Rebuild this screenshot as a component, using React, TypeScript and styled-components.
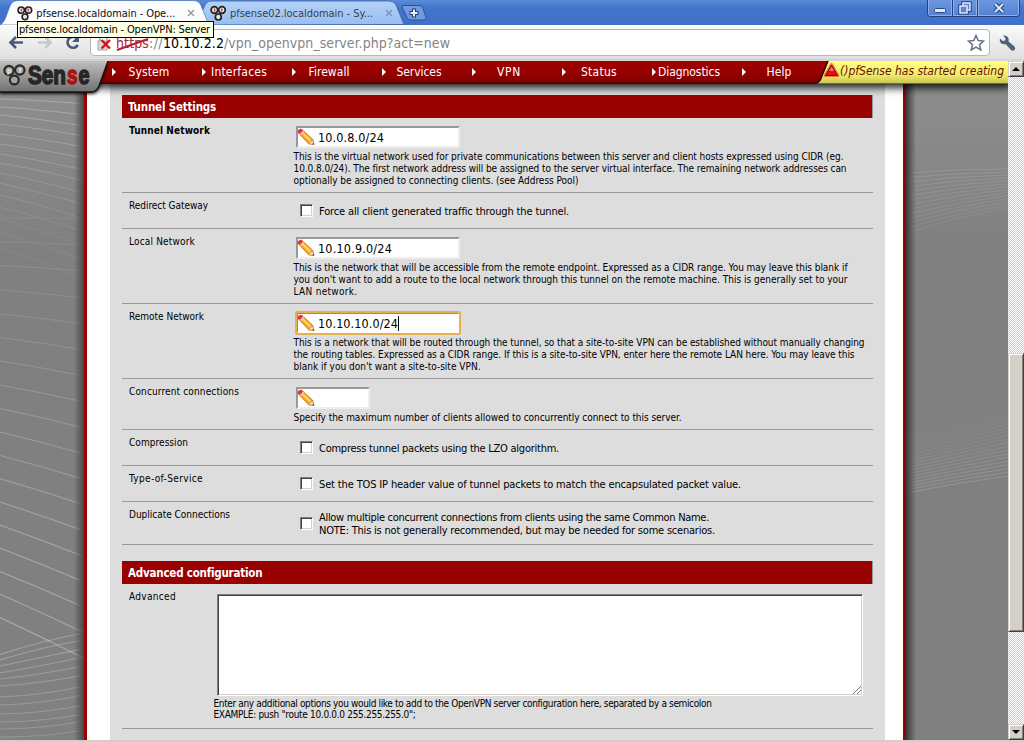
import React, { useLayoutEffect, useRef, useState } from "react";
import styled, { createGlobalStyle, css } from "styled-components";

const Global = createGlobalStyle`
  html, body { margin: 0; padding: 0; overflow: hidden; }
  body { width: 1024px; height: 742px; background: #808080; font-family: "DejaVu Sans Condensed", "DejaVu Sans", sans-serif; font-size: 11px; color: #000; }
  * { box-sizing: border-box; }
`;

const FitText = styled.span`
  display: inline-block;
  white-space: pre;
`;

/* Spreads the letters of one line so that it takes exactly the given width. */
function Fit({ w, children }: { w: number; children: string }) {
  const ref = useRef<HTMLSpanElement>(null);
  const [spacing, setSpacing] = useState(0);
  useLayoutEffect(() => {
    const el = ref.current;
    if (!el) return;
    setSpacing((w - el.getBoundingClientRect().width) / children.length);
  }, [w, children]);
  return <FitText ref={ref} style={{ letterSpacing: spacing }}>{children}</FitText>;
}

const Window = styled.div`
  width: 1024px;
  height: 742px;
  display: flex;
  flex-direction: column;
  overflow: hidden;
`;

/* ---------- browser chrome ---------- */
const TabStrip = styled.header`
  position: relative;
  flex: none;
  height: 25px;
  display: flex;
  background: linear-gradient(#5a8bd8 0, #4474cc 8px, #3f70c8 100%);
`;
const TabShapes = styled.svg`
  position: absolute;
  left: 0;
  top: 0;
`;
const Tab = styled.div<{ $dim?: boolean; $w: number; $pad: number }>`
  position: relative;
  display: flex;
  align-items: center;
  width: ${(p) => p.$w}px;
  padding-left: ${(p) => p.$pad}px;
  height: 25px;
  padding-top: 1px;
  gap: 3px;
  font-size: 11px;
  color: ${(p) => (p.$dim ? "#34404f" : "#111")};
`;
const TabClose = styled.svg`
  margin-left: 9px;
`;
const Controls = styled.div`
  position: absolute;
  right: 4px;
  top: 0;
  display: flex;
  height: 17px;
  border: 1px solid #22438a;
  border-top: 0;
  border-radius: 0 0 4px 4px;
  overflow: hidden;
`;
const Control = styled.div<{ $w: number }>`
  width: ${(p) => p.$w}px;
  height: 16px;
  border: 1px solid #8fb0e8;
  border-top: 0;
  background: linear-gradient(#6c98e0, #5583d2);
  display: flex;
  align-items: center;
  justify-content: center;
  & + & { box-shadow: -1px 0 0 #22438a; margin-left: 1px; }
`;
const Tooltip = styled.div`
  position: absolute;
  z-index: 5;
  left: 17px;
  top: 21px;
  width: 197px;
  height: 17px;
  padding-left: 1px;
  border: 1px solid #000;
  background: #ffffe1;
  font-size: 11px;
  line-height: 16px;
`;
const Toolbar = styled.div`
  flex: none;
  height: 36px;
  display: flex;
  align-items: center;
  background: linear-gradient(#fbfbfb, #dfdfdf 94%, #c8c8c8 97%, #e4e4e4);
`;
const NavButtons = styled.svg`
  flex: none;
`;
const AddressBar = styled.div`
  display: flex;
  align-items: center;
  width: 900px;
  height: 27px;
  margin-top: -1px;
  padding: 0 4px 0 6px;
  border: 1px solid #b4b6ba;
  border-radius: 4px;
  background: #fff;
  font-size: 14px;
  color: #858585;
`;
const Url = styled.div`
  flex: 1;
  display: flex;
  padding: 1px 0 0 5px;
`;
const Struck = styled.span`
  position: relative;
  color: #b02030;
`;
const StrikeLine = styled.svg`
  position: absolute;
  left: 0;
  top: 1px;
`;
const Host = styled.span`
  color: #000;
`;
const Wrench = styled.svg`
  margin-left: 8px;
`;

/* ---------- page ---------- */
const Viewport = styled.div`
  flex: none;
  height: 679px;
  display: flex;
`;
const Page = styled.div`
  position: relative;
  width: 1008px;
  height: 679px;
  display: flex;
  flex-direction: column;
  overflow: hidden;
  background: #808080;
`;
const Menu = styled.nav`
  position: relative;
  z-index: 2;
  flex: none;
  display: flex;
  height: 23px;
  padding-left: 104px;
  background: linear-gradient(#a00000 0, #960000 55%, #800000 90%, #300 100%);
  box-shadow: 0 1px 8px 3px rgba(0, 0, 0, 0.85);
`;
const LogoPlate = styled.svg`
  position: absolute;
  left: 0;
  top: 0;
`;
const MenuItem = styled.div`
  position: relative;
  width: 90px;
  height: 21px;
  display: flex;
  align-items: center;
  justify-content: center;
  color: #fff;
  font-size: 12px;
  &::before {
    content: "";
    position: absolute;
    left: 8px;
    top: 7px;
    border-left: 4px solid #fff;
    border-top: 4px solid transparent;
    border-bottom: 4px solid transparent;
  }
`;
const Notice = styled.div`
  position: absolute;
  right: 0;
  top: 0;
  width: 192px;
  height: 23px;
  padding: 2px 0 0 24px;
  font-size: 12px;
  line-height: 16px;
  font-style: italic;
  color: #6a1000;
`;
const NoticeShape = styled.svg`
  position: absolute;
  left: 0;
  top: 0;
`;
const NoticeText = styled.span`
  position: relative;
`;
const Columns = styled.main`
  flex: 1;
  display: flex;
`;
const Side = styled.div<{ $w: number; $right?: boolean }>`
  position: relative;
  width: ${(p) => p.$w}px;
  flex: none;
  overflow: hidden;
  background: linear-gradient(#8e8e8e, #808080 160px);
  &::after {
    content: "";
    position: absolute;
    top: 0;
    bottom: 0;
    width: 10px;
    ${(p) => (p.$right ? css`left: 0; background: linear-gradient(90deg, #3a3a3a, rgba(110,110,110,0));` : css`right: 0; background: linear-gradient(-90deg, #484848, rgba(110,110,110,0));`)}
  }
`;
const Sheet = styled.div`
  width: 822px;
  flex: none;
  display: flex;
  border: solid #990000;
  border-width: 0 3px;
  background: #fff;
  padding: 0 18px 0 23px;
`;
const Form = styled.div`
  flex: 1;
  background: #dddddd;
  padding: 11px 12px 0 12px;
`;
const SectionTitle = styled.h2<{ $gap?: number }>`
  margin: ${(p) => p.$gap || 0}px 0 0;
  height: 23px;
  padding-left: 6px;
  background: #990000;
  border-right: 1px solid #999;
  color: #fff;
  font-size: 11.5px;
  font-weight: bold;
  line-height: 24px;
`;
const Row = styled.div<{ $h: number }>`
  display: flex;
  height: ${(p) => p.$h}px;
  border-bottom: 1px solid #999;
`;
const Label = styled.div<{ $w?: number; $bold?: boolean }>`
  width: ${(p) => p.$w || 172}px;
  flex: none;
  padding: 6px 0 0 7px;
  font-size: 10px;
  line-height: 13px;
  font-weight: ${(p) => (p.$bold ? "bold" : "normal")};
`;
const Field = styled.div`
  flex: 1;
  padding-top: 8px;
`;
const Input = styled.div<{ $w: number; $focus?: boolean }>`
  display: flex;
  align-items: center;
  width: ${(p) => p.$w}px;
  height: 22px;
  margin-left: 2px;
  background: #fff;
  border: 2px solid;
  border-color: #999 #eee #eee #999;
  font-size: 12.5px;
  ${(p) => p.$focus && css`border-color: #9b8a68 #fff #fff #9b8a68; outline: 2px solid #e5b04e; outline-offset: -1px; border-radius: 1px;`}
`;
const Pencil = styled.svg`
  flex: none;
  margin: 0 3px 0 -1px;
`;
const Caret = styled.span`
  width: 1px;
  height: 15px;
  background: #000;
`;
const Help = styled.div<{ $lh?: number }>`
  display: flex;
  flex-direction: column;
  align-items: flex-start;
  padding-top: ${(p) => (p.$lh ? 2 : 3)}px;
  margin-left: -0.5px;
  font-size: 10px;
  line-height: ${(p) => p.$lh || 12}px;
`;
const CheckRow = styled.div<{ $top: number }>`
  display: flex;
  align-items: center;
  gap: 6px;
  padding: ${(p) => p.$top}px 0 0 6px;
  font-size: 11px;
  line-height: 13px;
`;
const CheckBox = styled.span`
  width: 13px;
  height: 13px;
  margin-bottom: 1px;
  background: #fff;
  border: 1px solid;
  border-color: #808080 #fff #fff #808080;
  box-shadow: inset 1px 1px 0 #404040, inset -1px -1px 0 #d4d0c8;
`;
const CheckText = styled.div`
  display: flex;
  flex-direction: column;
  align-items: flex-start;
  padding-top: 1px;
`;
const TextArea = styled.div`
  position: relative;
  width: 646px;
  height: 102px;
  margin: 2px 0 0 3px;
  background: #fff;
  border: 1px solid;
  border-color: #808080 #fff #fff #808080;
  box-shadow: inset 1px 1px 0 #404040, inset -1px -1px 0 #d4d0c8;
`;
const Grip = styled.svg`
  position: absolute;
  right: 1px;
  bottom: 1px;
`;

/* ---------- scrollbar ---------- */
const Scrollbar = styled.div`
  width: 16px;
  height: 679px;
  display: flex;
  flex-direction: column;
  background: repeating-conic-gradient(#fff 0 25%, #d4d0c8 0 50%) 0 0 / 2px 2px;
`;
const ScrollPiece = styled.div<{ $h: number; $mt?: number }>`
  height: ${(p) => p.$h}px;
  margin-top: ${(p) => p.$mt || 0}px;
  display: flex;
  align-items: center;
  justify-content: center;
  background: #d4d0c8;
  border: 1px solid;
  border-color: #d4d0c8 #404040 #404040 #d4d0c8;
  box-shadow: inset 1px 1px 0 #fff, inset -1px -1px 0 #808080;
`;
const StatusEdge = styled.footer`
  flex: 1;
  background: #d4d0c8;
`;

const Favicon = () => (
  <svg width="17" height="17" viewBox="0 0 17 17">
    <g fill="#e8e8e8" stroke="#222" strokeWidth="1.7">
      <circle cx="4.400" cy="5" r="3.300" /><circle cx="12" cy="5" r="3.300" /><circle cx="8.300" cy="12" r="3" />
    </g>
    <path d="M4.600 3.500v3M11.800 3.500v3" stroke="#e0402c" strokeWidth="1.6" />
  </svg>
);

const Close = ({ color }: { color: string }) => (
  <TabClose width="8" height="8"><path d="M1 1l6 6M7 1l-6 6" stroke={color} strokeWidth="1.4" /></TabClose>
);

const PencilIcon = () => (
  <Pencil width="18" height="18" viewBox="0 0 18 18">
    <path d="M1 4.500L5 1.500 15.500 11l1.500 5.500-5.500-.8z" fill="#f8a41c" stroke="#c87a1c" strokeWidth=".8" />
    <path d="M5 4.500l8.800 8.600" stroke="#ffd870" strokeWidth="2" />
    <path d="M.6 4.600L1.200 2 3.800.6 6 2.400 3 5.800z" fill="#e0304c" />
    <path d="M3 6l3.200-3.400 1 .9L4 7z" fill="#e8c8b0" />
    <path d="M11.500 15.700l1-1.200.8-1.500 1.600-.2.600-1.800 1.500 5.500z" fill="#fbe0b0" stroke="#a87a4a" strokeWidth=".6" />
    <path d="M15.200 16.300l1.800.3-.5-2z" fill="#704030" />
  </Pencil>
);

const leftFan: number[][] = [
  [99, 104], [107, 115], [115, 126], [124, 136], [134, 147], [144, 158], [154, 170], [163, 181], [173, 193], [183, 205], [195, 219], [207, 232], [219, 246], [233, 260], [248, 279],
];
const leftLines: number[][] = [
  [218, 219], [242, 245], [265.6, 271], [290, 298], [314, 324], [337.5, 350], [361, 376], [385, 402], [408.5, 428], [432, 454], [455.5, 479.5], [478.7, 505], [502, 531], [525, 556.7], [548, 582], [571.5, 607.3], [594.2, 632.6], [617.5, 658.3],
];
const leftLow: number[][] = [
  [654.5, 633], [660, 640], [666, 648.7], [673, 657], [679, 666], [686, 675], [697, 686], [705, 695], [714, 705], [722, 714], [729, 721], [737, 730],
];

function LeftWaves() {
  return (
    <svg width="84" height="656" viewBox="0 84 84 656" fill="none" strokeWidth="1.2">
      {leftFan.map(([a, b], i) => (
        <path key={i} d={`M0 ${a}Q45 ${(a + b) / 2 - 1} 84 ${b}`} stroke="#fff" strokeOpacity={0.26 - i * 0.015} />
      ))}
      {leftLines.map(([a, b], i) => (
        <path key={i} d={`M0 ${a}Q42 ${(a + b) / 2 - 1} 84 ${b}`} stroke="#fff" strokeOpacity={0.07 + i * 0.015} />
      ))}
      {leftLow.map(([a, b], i) => (
        <path key={i} d={`M0 ${a}Q42 ${(a + b) / 2 + (i < 2 ? -3 : Math.min(i - 2, 4))} 84 ${b}`} stroke="#fff" strokeOpacity={0.26 - i * 0.008} />
      ))}
    </svg>
  );
}

function RightWaves() {
  return (
    <svg width="102" height="656" viewBox="0 84 102 656" fill="none" strokeWidth="1">
      {Array.from({ length: 14 }, (_, i) => (
        <path key={i} d={`M0 ${173 + i * 4.6}Q50 ${169 + i * 3.7} 102 ${169 + i * 2.95}`} stroke="#fff" strokeOpacity={0.13 - i * 0.004} />
      ))}
      {Array.from({ length: 20 }, (_, i) => (
        <path key={i} d={`M0 ${493 - i * 3.1}Q50 ${483 - i * 3.3} 102 ${476 - i * 3.7}`} stroke="#fff" strokeOpacity={0.15 - i * 0.007} />
      ))}
    </svg>
  );
}

const menu: [string, number][] = [
  ["System", 41], ["Interfaces", 56], ["Firewall", 41], ["Services", 45], ["VPN", 24], ["Status", 36], ["Diagnostics", 62], ["Help", 25],
];

type Line = [string, number];
const Lines = ({ lines }: { lines: Line[] }) => (
  <>{lines.map(([t, w]) => <Fit key={t} w={w}>{t}</Fit>)}</>
);

function InputRow({ label, lw, bold, h = 75, value, vw = 0, w = 164, focus, help }: {
  label: string; lw: number; bold?: boolean; h?: number; value?: string; vw?: number; w?: number; focus?: boolean; help: Line[];
}) {
  return (
    <Row $h={h}>
      <Label $bold={bold}><Fit w={lw}>{label}</Fit></Label>
      <Field>
        <Input $w={w} $focus={focus}>
          <PencilIcon />
          {value && <Fit w={vw}>{value}</Fit>}
          {focus && <Caret />}
        </Input>
        <Help><Lines lines={help} /></Help>
      </Field>
    </Row>
  );
}

function CheckboxRow({ label, lw, h = 36, top = 3, lines }: { label: string; lw: number; h?: number; top?: number; lines: Line[] }) {
  return (
    <Row $h={h}>
      <Label><Fit w={lw}>{label}</Fit></Label>
      <Field>
        <CheckRow $top={top}>
          <CheckBox />
          <CheckText><Lines lines={lines} /></CheckText>
        </CheckRow>
      </Field>
    </Row>
  );
}

export default function App() {
  return (
    <Window>
      <Global />
      <TabStrip>
        <TabShapes width="1024" height="25">
          <defs>
            <linearGradient id="dimTab" x2="0" y2="1"><stop stopColor="#b4d2f8" /><stop offset="1" stopColor="#98bdf0" /></linearGradient>
          </defs>
          <path d="M196 25L205 5q2-4 6-4h178q5 0 7 4l8 19.5z" fill="url(#dimTab)" stroke="#3c619f" strokeWidth=".8" />
          <path d="M402 7q0-1.5 2-1.5h15q3 0 4 3l3 9q.5 2.500-2 2.500h-13q-3 0-4-2.500z" fill="#6e9ae2" stroke="#2d5198" />
          <path d="M414 8.500v9M409.500 13h9" stroke="#27406f" strokeWidth="4" />
          <path d="M414 9.500v7M410.500 13h7" stroke="#e6eefb" strokeWidth="2" />
          <path d="M0 25C7 22 8 5 13 2q2-1.500 6-1.500h174q6 0 8 5l6 15q1.500 4.500 5 4.500z" fill="#fbfcfd" stroke="#3c619f" strokeWidth=".6" />
        </TabShapes>
        <Tab $w={195} $pad={17}><Favicon /><Fit w={139}>pfsense.localdomain - Ope...</Fit><Close color="#9a9a9a" /></Tab>
        <Tab $w={200} $pad={15} $dim><Favicon /><Fit w={143}>pfsense02.localdomain - Sy...</Fit><Close color="#7793b8" /></Tab>
        <Controls>
          <Control $w={24}><svg width="12" height="12"><rect x=".5" y="6.500" width="11" height="4" rx="1" fill="#dfe7f5" stroke="#2c4a86" /></svg></Control>
          <Control $w={24}><svg width="14" height="14" fill="#5a85d0"><g stroke="#25427d" strokeWidth="3.400"><rect x="5" y="2" width="7" height="7" /><rect x="2" y="5" width="7" height="7" /></g><g stroke="#dfe7f5" strokeWidth="1.500"><rect x="5" y="2" width="7" height="7" /><rect x="2" y="5" width="7" height="7" /></g></svg></Control>
          <Control $w={41}><svg width="12" height="12"><path d="M2 2l8 8M10 2l-8 8" stroke="#25427d" strokeWidth="4" /><path d="M2 2l8 8M10 2l-8 8" stroke="#dfe7f5" strokeWidth="2" /></svg></Control>
        </Controls>
        <Tooltip><Fit w={191}>pfsense.localdomain - OpenVPN: Server</Fit></Tooltip>
      </TabStrip>
      <Toolbar>
        <NavButtons width="90" height="36" fill="none" strokeWidth="2.600">
          <path d="M23 17.500H11M16 12l-5.500 5.500L16 23" stroke="#4a5a78" />
          <path d="M38 17.500h12M45 12l5.500 5.500L45 23" stroke="#c4c8cf" />
          <path d="M77 13.500a5.500 5.500 0 1 0 .8 6.500" stroke="#4a5a78" />
          <path d="M79 10v7h-7z" fill="#4a5a78" />
        </NavButtons>
        <AddressBar>
          <svg width="14" height="18" viewBox="0 0 14 18">
            <path d="M3 8V5q0-3 3.500-3T10 5v3" fill="none" stroke="#b0b0b0" strokeWidth="1.600" />
            <rect x="1" y="7" width="9" height="9" fill="#d8d8d8" stroke="#aaa" />
            <path d="M4.500 6l8.500 8.500M13 6l-8.500 8.500" stroke="#d0141c" strokeWidth="2.400" />
          </svg>
          <Url>
            <Struck>
              <Fit w={33}>https</Fit>
              <StrikeLine width="35" height="16"><path d="M1 14L32 3" stroke="#b8202c" strokeWidth="2" /></StrikeLine>
            </Struck>
            <Fit w={14}>://</Fit>
            <Host><Fit w={61}>10.10.2.2</Fit></Host>
            <Fit w={226}>/vpn_openvpn_server.php?act=new</Fit>
          </Url>
          <svg width="18" height="18" viewBox="0 0 18 18"><path d="M9 1.500l2.200 5 5.400.5-4.100 3.600 1.300 5.400L9 13.200 4.200 16l1.300-5.400L1.400 7l5.400-.5z" fill="#fff" stroke="#66738a" strokeWidth="1.500" /></svg>
        </AddressBar>
        <Wrench width="18" height="18" viewBox="0 0 18 18"><path d="M5 1.500l2.500 2.700-.4 2.300-2.400.6L2 4.500C1 8 3.500 11 7.500 10l5.500 6q2 1.500 3.500 0t0-3.500L10.500 7.500C11.500 4 9 .8 5 1.500z" fill="#51617d" /></Wrench>
      </Toolbar>
      <Viewport>
        <Page>
          <Menu>
            <LogoPlate width="112" height="40" viewBox="0 0 112 40">
              <defs>
                <linearGradient id="plate" x2="0" y2="1"><stop stopColor="#bdbdbd" /><stop offset=".5" stopColor="#989898" /><stop offset="1" stopColor="#707070" /></linearGradient>
                <filter id="soft" x="-10%" y="-20%" width="130%" height="160%"><feGaussianBlur stdDeviation="1.800" /></filter>
              </defs>
              <path d="M0 3H108L99 28q-2 5-8 5H0z" fill="#000" opacity=".8" filter="url(#soft)" />
              <path d="M-2 0H108L99 25q-2.500 6-8 6H-2z" fill="url(#plate)" stroke="#151515" strokeWidth="1.400" />
              <path d="M0 .7H107" stroke="#d8d8d8" />
              <g fill="#a4a4a4" stroke="#2a2a2a" strokeWidth="2.200"><circle cx="9" cy="9.500" r="4.700" /><circle cx="19.800" cy="9" r="4.700" /><circle cx="14.300" cy="19" r="4.400" /></g>
              <g fill="#eee" fontFamily="Liberation Sans" fontWeight="bold" fontSize="7"><text x="7" y="11.500">p</text><text x="18.700" y="11.500">f</text></g>
              <g fontFamily="Liberation Sans Narrow, Liberation Sans" fontWeight="bold" fontSize="25" strokeWidth="1.500" fill="#262626" stroke="#262626">
                <text x="28" y="23" textLength="38" lengthAdjust="spacingAndGlyphs">Sen</text>
                <text x="67" y="23" textLength="10.500" lengthAdjust="spacingAndGlyphs" fill="#a81414" stroke="#a81414">s</text>
                <text x="78.500" y="23" textLength="11" lengthAdjust="spacingAndGlyphs">e</text>
              </g>
            </LogoPlate>
            {menu.map(([t, w]) => <MenuItem key={t}><Fit w={w}>{t}</Fit></MenuItem>)}
            <Notice>
              <NoticeShape width="192" height="23">
                <defs><linearGradient id="note" x2="0" y2="1"><stop stopColor="#ffff84" /><stop offset=".6" stopColor="#f0ee70" /><stop offset="1" stopColor="#c8c450" /></linearGradient></defs>
                <path d="M0 22.500q4-1 5.500-6L12 0H192V22.500z" fill="url(#note)" />
                <path d="M0 22q4-1 5.500-6L12 0" fill="none" stroke="#300" strokeWidth="1.500" />
                <path d="M15.500 3.500l6.500 11H9z" fill="#e8141c" stroke="#f47a30" strokeWidth="3" strokeLinejoin="round" />
                <path d="M15.500 4l6 10.500h-12z" fill="#d81018" stroke="#600" strokeWidth=".8" />
                <path d="M15.500 5.500l2.500 4.500h-5z" fill="#f07078" />
              </NoticeShape>
              <NoticeText><Fit w={164}>()pfSense has started creating</Fit></NoticeText>
            </Notice>
          </Menu>
          <Columns>
            <Side $w={84}><LeftWaves /></Side>
            <Sheet>
              <Form>
                <SectionTitle><Fit w={88}>Tunnel Settings</Fit></SectionTitle>
                <InputRow label="Tunnel Network" lw={81} bold value="10.0.8.0/24" vw={66} help={[
                  ["This is the virtual network used for private communications between this server and client hosts expressed using CIDR (eg.", 550],
                  ["10.0.8.0/24). The first network address will be assigned to the server virtual interface. The remaining network addresses can", 553],
                  ["optionally be assigned to connecting clients. (see Address Pool)", 285],
                ]} />
                <CheckboxRow label="Redirect Gateway" lw={79} lines={[["Force all client generated traffic through the tunnel.", 250]]} />
                <InputRow label="Local Network" lw={66} value="10.10.9.0/24" vw={74} help={[
                  ["This is the network that will be accessible from the remote endpoint. Expressed as a CIDR range. You may leave this blank if", 554],
                  ["you don't want to add a route to the local network through this tunnel on the remote machine. This is generally set to your", 554],
                  ["LAN network.", 64],
                ]} />
                <InputRow label="Remote Network" lw={75} value="10.10.10.0/24" vw={80} focus help={[
                  ["This is a network that will be routed through the tunnel, so that a site-to-site VPN can be established without manually changing", 571],
                  ["the routing tables. Expressed as a CIDR range. If this is a site-to-site VPN, enter here the remote LAN here. You may leave this", 561],
                  ["blank if you don't want a site-to-site VPN.", 187],
                ]} />
                <InputRow label="Concurrent connections" lw={110} h={51} w={74} help={[
                  ["Specify the maximum number of clients allowed to concurrently connect to this server.", 388],
                ]} />
                <CheckboxRow label="Compression" lw={59} lines={[["Compress tunnel packets using the LZO algorithm.", 240]]} />
                <CheckboxRow label="Type-of-Service" lw={74} lines={[["Set the TOS IP header value of tunnel packets to match the encapsulated packet value.", 422]]} />
                <CheckboxRow label="Duplicate Connections" lw={101} h={43} top={0} lines={[
                  ["Allow multiple concurrent connections from clients using the same Common Name.", 390],
                  ["NOTE: This is not generally recommended, but may be needed for some scenarios.", 396],
                ]} />
                <SectionTitle $gap={16}><Fit w={134}>Advanced configuration</Fit></SectionTitle>
                <Row $h={145}>
                  <Label $w={92}><Fit w={47}>Advanced</Fit></Label>
                  <Field>
                    <TextArea>
                      <Grip width="9" height="9"><path d="M1 9L9 1M5 9L9 5" stroke="#777" /></Grip>
                    </TextArea>
                    <Help $lh={11}><Lines lines={[
                      ["Enter any additional options you would like to add to the OpenVPN server configuration here, separated by a semicolon", 498],
                      ["EXAMPLE: push \"route 10.0.0.0 255.255.255.0\";", 202],
                    ]} /></Help>
                  </Field>
                </Row>
              </Form>
            </Sheet>
            <Side $w={102} $right><RightWaves /></Side>
          </Columns>
        </Page>
        <Scrollbar>
          <ScrollPiece $h={16}><svg width="8" height="4"><path d="M0 4L4 0l4 4z" /></svg></ScrollPiece>
          <ScrollPiece $h={279} $mt={276} />
          <ScrollPiece $h={16} $mt={92}><svg width="8" height="4"><path d="M0 0l4 4 4-4z" /></svg></ScrollPiece>
        </Scrollbar>
      </Viewport>
      <StatusEdge />
    </Window>
  );
}
